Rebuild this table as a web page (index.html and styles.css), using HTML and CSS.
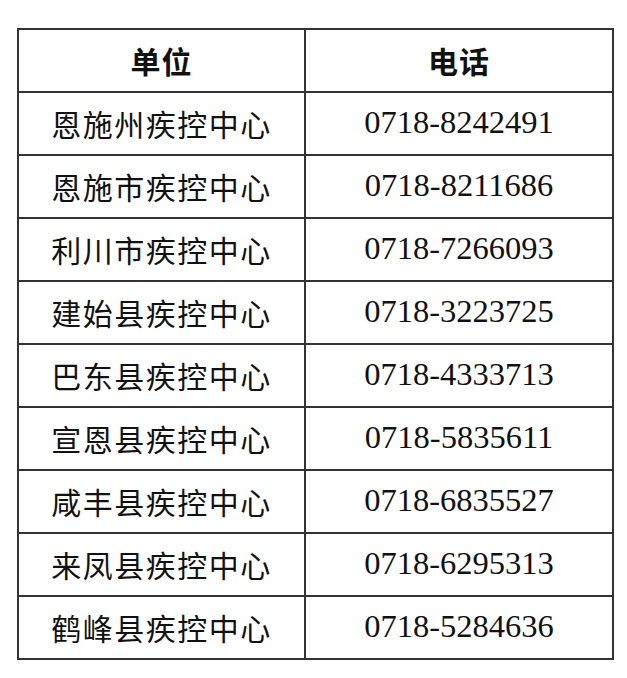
FILE: index.html
```html
<!DOCTYPE html>
<html lang="zh">
<head>
<meta charset="utf-8">
<link rel="stylesheet" href="styles.css">
</head>
<body>
<table class="tbl">
  <colgroup><col class="c1"><col class="c2"></colgroup>
  <thead>
    <tr><th>单位</th><th>电话</th></tr>
  </thead>
  <tbody>
    <tr><td class="name">恩施州疾控中心</td><td class="tel">0718-8242491</td></tr>
    <tr><td class="name">恩施市疾控中心</td><td class="tel">0718-8211686</td></tr>
    <tr><td class="name">利川市疾控中心</td><td class="tel">0718-7266093</td></tr>
    <tr><td class="name">建始县疾控中心</td><td class="tel">0718-3223725</td></tr>
    <tr><td class="name">巴东县疾控中心</td><td class="tel">0718-4333713</td></tr>
    <tr><td class="name">宣恩县疾控中心</td><td class="tel">0718-5835611</td></tr>
    <tr><td class="name">咸丰县疾控中心</td><td class="tel">0718-6835527</td></tr>
    <tr><td class="name">来凤县疾控中心</td><td class="tel">0718-6295313</td></tr>
    <tr><td class="name">鹤峰县疾控中心</td><td class="tel">0718-5284636</td></tr>
  </tbody>
</table>
</body>
</html>
```
FILE: styles.css
```css
html, body {
  margin: 0;
  padding: 0;
  background: #ffffff;
}
body {
  padding: 28px 0 0 17px;
}
.tbl {
  border-collapse: collapse;
  table-layout: fixed;
  width: 595px;
  color: #111;
}
.c1 { width: 287px; }
.c2 { width: 308px; }
.tbl th, .tbl td {
  border: 2px solid #333;
  height: 59px;
  padding: 0 0 2px 0;
  text-align: center;
  vertical-align: middle;
}
.tbl th {
  font-family: "Noto Sans CJK SC", "Noto Sans", sans-serif;
  font-weight: 700;
  font-size: 30px;
  letter-spacing: 1px;
}
.name {
  font-family: "Noto Sans CJK SC", "Noto Sans", sans-serif;
  font-size: 30px;
  letter-spacing: 1.5px;
  font-weight: 400;
}
.tel {
  font-family: "Liberation Serif", "Times New Roman", serif;
  font-size: 32.5px;
}
```
